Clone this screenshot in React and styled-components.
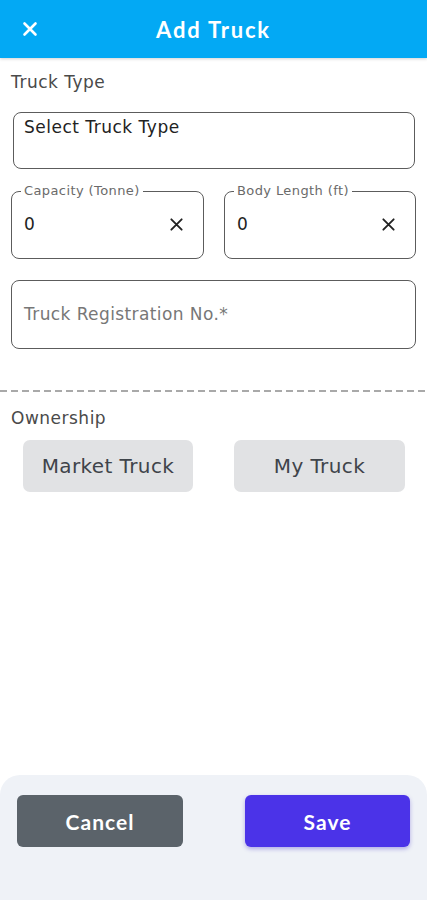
import React from "react";
import styled, { createGlobalStyle } from "styled-components";

const Global = createGlobalStyle`
  * { box-sizing: border-box; }
  html, body { margin: 0; padding: 0; background: #fff; }
  body { font-family: "DejaVu Sans", "Open Sans", sans-serif; }
`;

const Page = styled.div`
  width: 427px;
  height: 900px;
  display: flex;
  flex-direction: column;
  background: #fff;
  overflow: hidden;
`;

const Header = styled.header`
  height: 58px;
  flex: none;
  background: #03a9f4;
  display: flex;
  align-items: center;
  position: relative;
  box-shadow: 0 1px 3px rgba(0, 0, 0, 0.18);
  z-index: 1;
`;

const CloseBtn = styled.button`
  width: 60px;
  height: 58px;
  border: 0;
  background: transparent;
  display: flex;
  align-items: center;
  justify-content: center;
  padding: 0;
  color: #fff;
`;

const Title = styled.h1`
  margin: 0;
  position: absolute;
  left: 0;
  right: 0;
  text-align: center;
  pointer-events: none;
  font-family: "Lato", "Open Sans", sans-serif;
  font-weight: 700;
  font-size: 22px;
  letter-spacing: 1.8px;
  color: #fff;
`;

const Content = styled.main`
  flex: 1;
  display: flex;
  flex-direction: column;
`;

const Form = styled.div`
  padding: ${(p) => p.$pt || 0}px 11px 0 11px;
  display: flex;
  flex-direction: column;
`;

const SectionLabel = styled.div`
  font-size: 17px;
  letter-spacing: 0.5px;
  color: #4a4a4a;
  line-height: 20px;
  margin-bottom: ${(p) => p.$mb || 0}px;
`;

const SelectBox = styled.div`
  margin: 0 1px 0 2px;
  height: 57px;
  border: 1px solid #5c5c5c;
  border-radius: 8px;
  padding: 4px 10px;
  font-size: 17px;
  letter-spacing: 0.5px;
  color: #222;
`;

const Row = styled.div`
  display: grid;
  grid-template-columns: 193px 192px;
  justify-content: space-between;
  margin-top: 22px;
`;

const Field = styled.div`
  position: relative;
  height: ${(p) => p.$h || 68}px;
  margin-top: ${(p) => p.$mt || 0}px;
  border: 1px solid #5c5c5c;
  border-radius: 8px;
  padding: 0 12px;
  display: flex;
  align-items: center;
  justify-content: space-between;
`;

const FloatLabel = styled.span`
  position: absolute;
  top: -8px;
  left: 9px;
  padding: 0 3px;
  background: #fff;
  font-size: 13px;
  letter-spacing: 0.4px;
  line-height: 14px;
  color: #6a6a6a;
`;

const Value = styled.span`
  font-size: 17px;
  color: #222;
  margin-top: -2px;
`;

const Placeholder = styled.span`
  font-size: 17px;
  letter-spacing: 0.4px;
  color: #777;
  margin-top: -2px;
`;

const ClearBtn = styled.span`
  display: flex;
  color: #222;
  margin-right: 7px;
  margin-top: -2px;
`;

const Dashed = styled.div`
  margin-top: 41px;
  height: 2px;
  background: repeating-linear-gradient(90deg, #a9a9a9 0 7px, transparent 7px 11px);
`;

const Choices = styled.div`
  display: grid;
  grid-template-columns: 170px 171px;
  justify-content: space-between;
  padding: 0 22px 0 23px;
  margin-top: 12px;
`;

const Choice = styled.button`
  height: 52px;
  border: 0;
  border-radius: 7px;
  background: #e1e2e4;
  font-family: "DejaVu Sans", "Open Sans", sans-serif;
  font-size: 20px;
  letter-spacing: 0.4px;
  color: #3f444a;
  padding: 0;
`;

const Footer = styled.footer`
  margin-top: auto;
  height: 125px;
  background: #eff2f7;
  border-radius: 20px 20px 0 0;
  display: grid;
  grid-template-columns: 166px 165px;
  justify-content: space-between;
  align-content: start;
  padding: 20px 17px 0 17px;
`;

const ActionBtn = styled.button`
  height: 52px;
  border: 0;
  border-radius: 6px;
  background: ${(p) => (p.$primary ? "#4b33e8" : "#5b636a")};
  box-shadow: ${(p) => (p.$primary ? "0 2px 4px rgba(60,40,200,0.35)" : "none")};
  color: #fff;
  font-family: "Lato", "Open Sans", sans-serif;
  font-weight: 700;
  font-size: 21px;
  letter-spacing: 1px;
`;

const XIcon = ({ size = 16, stroke = 2.2 }) => (
  <svg width={size} height={size} viewBox="0 0 16 16" fill="none">
    <path d="M2.5 2.5 L13.5 13.5 M13.5 2.5 L2.5 13.5" stroke="currentColor" strokeWidth={stroke} strokeLinecap="round" />
  </svg>
);

export default function App() {
  return (
    <Page>
      <Global />
      <Header>
        <CloseBtn aria-label="close">
          <XIcon size={16} stroke={2.6} />
        </CloseBtn>
        <Title>Add Truck</Title>
      </Header>
      <Content>
        <Form $pt={14}>
          <SectionLabel $mb={20}>Truck Type</SectionLabel>
          <SelectBox>Select Truck Type</SelectBox>
          <Row>
            <Field>
              <FloatLabel>Capacity (Tonne)</FloatLabel>
              <Value>0</Value>
              <ClearBtn><XIcon size={15} stroke={2} /></ClearBtn>
            </Field>
            <Field>
              <FloatLabel>Body Length (ft)</FloatLabel>
              <Value>0</Value>
              <ClearBtn><XIcon size={15} stroke={2} /></ClearBtn>
            </Field>
          </Row>
          <Field $h={69} $mt={21}>
            <Placeholder>Truck Registration No.*</Placeholder>
          </Field>
        </Form>
        <Dashed />
        <Form $pt={16}>
          <SectionLabel>Ownership</SectionLabel>
        </Form>
        <Choices>
          <Choice>Market Truck</Choice>
          <Choice>My Truck</Choice>
        </Choices>
        <Footer>
          <ActionBtn>Cancel</ActionBtn>
          <ActionBtn $primary>Save</ActionBtn>
        </Footer>
      </Content>
    </Page>
  );
}
